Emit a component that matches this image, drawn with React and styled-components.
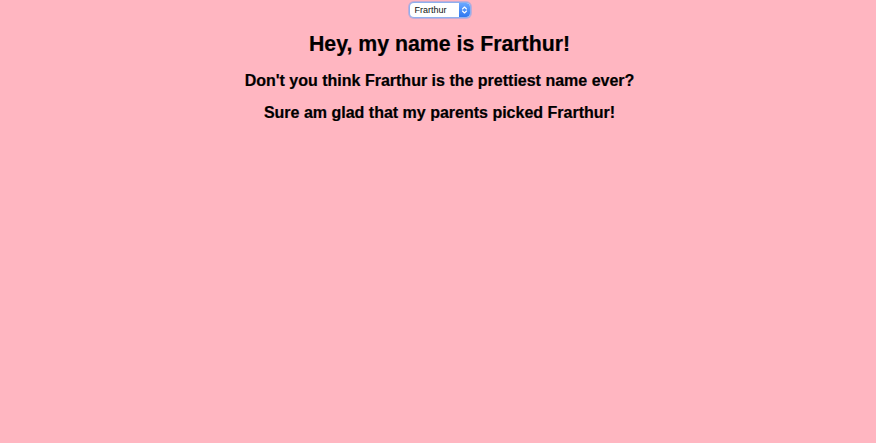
import React, { useState } from "react";
import styled, { createGlobalStyle } from "styled-components";

const Global = createGlobalStyle`
  html, body { margin: 0; padding: 0; background: #ffb6c1; }
  body { font-family: "Liberation Sans", Arial, Helvetica, sans-serif; color: #000; }
`;

const Page = styled.div`
  display: flex;
  flex-direction: column;
  align-items: center;
  padding: 3px 0 0 3px;
  min-height: 443px;
  box-sizing: border-box;
`;

const SelectWrap = styled.div`
  position: relative;
  width: 60px;
  height: 14px;
  box-sizing: border-box;
  border-radius: 4px;
  background: #fff;
  box-shadow: 0 0 0 1px #8fb0ee, 0 0 0 2px rgba(120, 160, 240, 0.45);
  display: flex;
  align-items: stretch;
  overflow: hidden;
`;

const NativeSelect = styled.select`
  position: absolute;
  inset: 0;
  opacity: 0;
  width: 100%;
  cursor: pointer;
`;

const SelectLabel = styled.span`
  flex: 1;
  font-family: "Liberation Sans", Arial, sans-serif;
  font-size: 9px;
  line-height: 14px;
  padding-left: 5px;
  color: #111;
`;

const ArrowBox = styled.span`
  width: 11px;
  background: linear-gradient(#6aa8ff, #2f78f0);
  border-radius: 0 3px 3px 0;
  display: flex;
  align-items: center;
  justify-content: center;
`;

const Title = styled.h1`
  margin: 15px 0 0;
  font-size: 21.3px;
  line-height: 24px;
  font-weight: bold;
  text-align: center;
  -webkit-text-stroke: 0.2px #000;
`;

const Sub = styled.h2`
  margin: ${(p) => p.$top}px 0 0;
  font-size: 16px;
  line-height: 18px;
  font-weight: bold;
  text-align: center;
  -webkit-text-stroke: 0.2px #000;
`;

export default function App() {
  const [name, setName] = useState("Frarthur");
  return (
    <>
      <Global />
      <Page>
        <SelectWrap>
          <SelectLabel>{name}</SelectLabel>
          <ArrowBox>
            <svg width="7" height="10" viewBox="0 0 7 10">
              <path d="M1.5 4 L3.5 2 L5.5 4 M1.5 6 L3.5 8 L5.5 6" stroke="#fff" strokeWidth="1.1" fill="none" strokeLinecap="round" strokeLinejoin="round" />
            </svg>
          </ArrowBox>
          <NativeSelect value={name} onChange={(e) => setName(e.target.value)}>
            <option>Frarthur</option>
            <option>Arthur</option>
          </NativeSelect>
        </SelectWrap>
        <Title>Hey, my name is {name}!</Title>
        <Sub $top={16}>Don't you think {name} is the prettiest name ever?</Sub>
        <Sub $top={14}>Sure am glad that my parents picked {name}!</Sub>
      </Page>
    </>
  );
}
